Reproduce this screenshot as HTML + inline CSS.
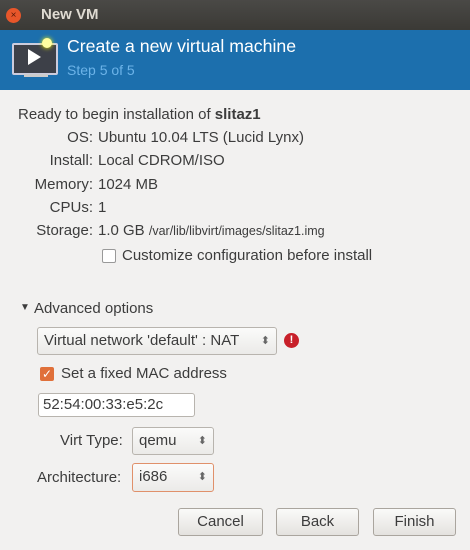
<!DOCTYPE html><html><head><style>
body{margin:0;width:470px;height:550px;overflow:hidden;background:#f2f1f0;font-family:"Liberation Sans",sans-serif;font-size:15px;color:#3c3c3c;position:relative}
.a{position:absolute;white-space:nowrap}
.r{text-align:right;width:93px;left:0}
.combo{position:absolute;border:1px solid #b8b4ae;border-radius:3px;background:linear-gradient(#fbfbfa,#ebeae8);box-sizing:border-box;padding-left:6px;line-height:26px}
.combo:after{content:"⬍";position:absolute;right:6px;top:0;font-size:11px;color:#666}
.btn{position:absolute;border:1px solid #aaa59e;border-radius:3px;background:linear-gradient(#fafaf9,#e4e2df);box-sizing:border-box;text-align:center;line-height:26px;top:508px;height:28px}
</style></head><body>
<div class="a" style="left:0;top:0;width:470px;height:31px;background:linear-gradient(#4a4946,#3a3935)"></div>
<div class="a" style="left:6px;top:8px;width:15px;height:15px;border-radius:50%;background:#e8562a;color:#5a1a08;font-size:10px;text-align:center;line-height:15px">×</div>
<div class="a" style="left:41px;top:6px;color:#dfdbd2;font-weight:bold;font-size:15px">New VM</div>
<div class="a" style="left:0;top:30px;width:470px;height:60px;background:#1c6fad"></div>
<div class="a" style="left:12px;top:43px;width:42px;height:28px;background:#3d4048;border:2px solid #ccd;border-radius:2px"></div>
<div class="a" style="left:28px;top:49px;width:0;height:0;border-left:13px solid #fff;border-top:8px solid transparent;border-bottom:8px solid transparent"></div>
<div class="a" style="left:24px;top:74px;width:24px;height:3px;background:#ccc"></div>
<div class="a" style="left:42px;top:38px;width:10px;height:10px;border-radius:50%;background:#ffffa0;box-shadow:0 0 5px #ff0"></div>
<div class="a" style="left:67px;top:36px;color:#fff;font-size:17.7px">Create a new virtual machine</div>
<div class="a" style="left:67px;top:62px;color:#6cb3e8;font-size:14px">Step 5 of 5</div>
<div class="a" style="left:18px;top:106px">Ready to begin installation of <b>slitaz1</b></div>
<div class="a r" style="top:129px">OS:</div><div class="a" style="left:98px;top:129px">Ubuntu 10.04 LTS (Lucid Lynx)</div>
<div class="a r" style="top:152px">Install:</div><div class="a" style="left:98px;top:152px">Local CDROM/ISO</div>
<div class="a r" style="top:176px">Memory:</div><div class="a" style="left:98px;top:176px">1024 MB</div>
<div class="a r" style="top:199px">CPUs:</div><div class="a" style="left:98px;top:199px">1</div>
<div class="a r" style="top:222px">Storage:</div><div class="a" style="left:98px;top:222px">1.0 GB <span style="font-size:12.5px">/var/lib/libvirt/images/slitaz1.img</span></div>
<div class="a" style="left:102px;top:249px;width:12px;height:12px;border:1px solid #999;border-radius:2px;background:#fff"></div>
<div class="a" style="left:122px;top:247px">Customize configuration before install</div>
<div class="a" style="left:20px;top:302px;font-size:10px">▼</div>
<div class="a" style="left:34px;top:300px">Advanced options</div>
<div class="combo" style="left:37px;top:327px;width:240px;height:28px">Virtual network 'default' : NAT</div>
<div class="a" style="left:284px;top:333px;width:15px;height:15px;border-radius:50%;background:#c8202a;color:#fff;font-weight:bold;font-size:11px;text-align:center;line-height:15px">!</div>
<div class="a" style="left:40px;top:367px;width:14px;height:14px;border-radius:2px;background:#e0703a;color:#fff;font-size:12px;line-height:14px;text-align:center">✓</div>
<div class="a" style="left:61px;top:365px">Set a fixed MAC address</div>
<div class="a" style="left:38px;top:393px;width:157px;height:24px;border:1px solid #b8b4ae;border-radius:3px;background:#fff;box-sizing:border-box;padding-left:4px;line-height:22px">52:54:00:33:e5:2c</div>
<div class="a" style="left:60px;top:432px">Virt Type:</div>
<div class="combo" style="left:132px;top:427px;width:82px;height:28px">qemu</div>
<div class="a" style="left:37px;top:469px">Architecture:</div>
<div class="combo" style="left:132px;top:463px;width:82px;height:29px;border-color:#e0906a">i686</div>
<div class="btn" style="left:178px;width:85px">Cancel</div>
<div class="btn" style="left:276px;width:83px">Back</div>
<div class="btn" style="left:373px;width:83px">Finish</div>
</body></html>
